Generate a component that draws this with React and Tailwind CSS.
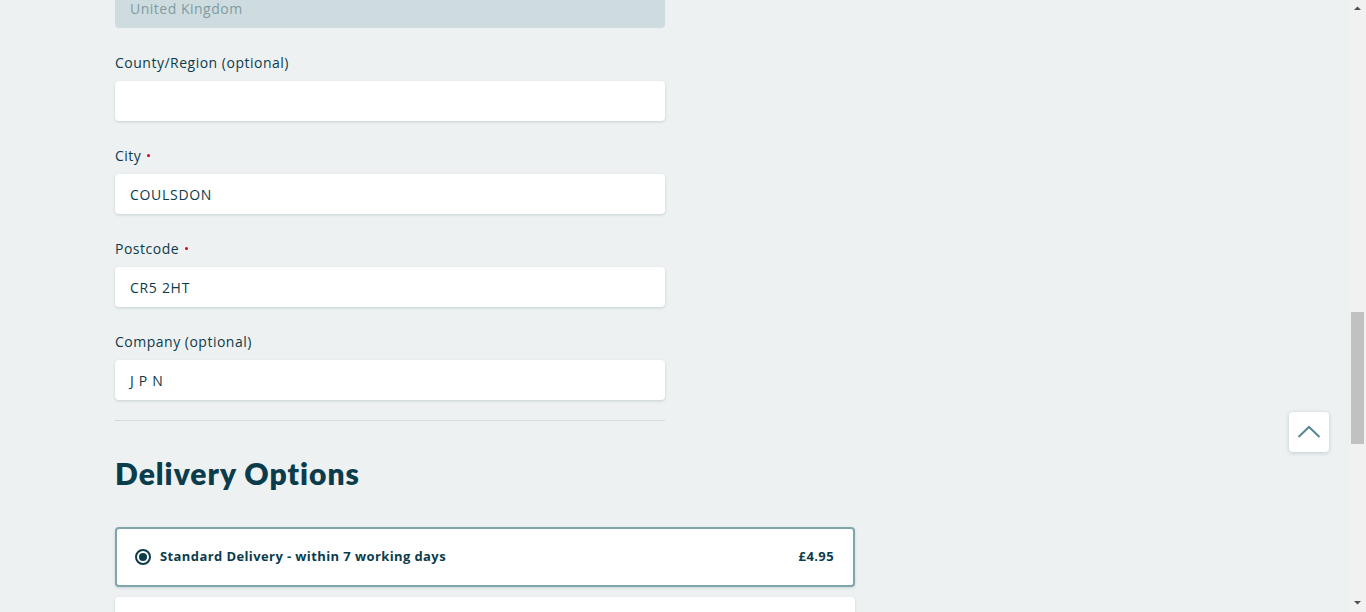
import React from 'react';

const fields = [
  { label: 'County/Region (optional)', value: '' },
  { label: 'City', value: 'COULSDON', required: true },
  { label: 'Postcode', value: 'CR5 2HT', required: true },
  { label: 'Company (optional)', value: 'J P N' },
];

const Field = ({ label, value, required }) => (
  <div className="mt-[23px]">
    <label className="flex items-center h-[22px] text-[14px] tracking-[0.5px] text-[#0d3b4b]">
      {label}
      {required && <span className="ml-[6px] w-[3px] h-[3px] rounded-full bg-[#d0021b]" />}
    </label>
    <div className="mt-[8px] h-[40px] w-[550px] bg-white rounded-[4px] shadow-[0_1px_3px_rgba(20,60,70,0.18)] flex items-center px-[15px] text-[14px] tracking-[0.7px] text-[#0d3b4b]">
      {value}
    </div>
  </div>
);

const Scrollbar = () => (
  <div className="w-[17px] h-full bg-[#f1f1f1] flex flex-col items-center shrink-0">
    <svg width="17" height="17" viewBox="0 0 17 17" className="shrink-0">
      <polygon points="5,10 12,10 8.5,6.5" fill="#505050" />
    </svg>
    <div className="mt-[295px] w-[13px] h-[132px] bg-[#c1c1c1]" />
    <div className="flex-1" />
    <svg width="17" height="17" viewBox="0 0 17 17" className="shrink-0">
      <polygon points="5,6 12,6 8.5,9.5" fill="#505050" />
    </svg>
  </div>
);

const App = () => {
  return (
    <div className="flex h-[612px] w-[1366px] overflow-hidden bg-[#edf1f2]" style={{ fontFamily: '"Open Sans", "Noto Sans", sans-serif' }}>
      <div className="flex-1 relative pl-[115px]">
        <div className="-mt-[12px] h-[40px] w-[550px] bg-[#cfdcdf] rounded-[4px] flex items-center px-[15px] text-[14px] tracking-[0.5px] text-[#7e9ba3]">
          United Kingdom
        </div>

        {fields.map((f, i) => (
          <Field key={i} {...f} />
        ))}

        <div className="mt-[20px] w-[550px] border-t border-[#d3dde0]" />

        <h2
          className="mt-[32px] text-[30px] leading-[40px] font-extrabold text-[#0b3c4c] tracking-[1px]"
          style={{ fontFamily: 'Lato, sans-serif' }}
        >
          Delivery Options
        </h2>

        <div className="mt-[34px] w-[740px] h-[60px] bg-white rounded-[4px] border-2 border-[#7fa5ac] flex items-center pl-[18px] pr-[19px] shadow-[0_1px_3px_rgba(20,60,70,0.15)]">
          <span className="w-[16px] h-[16px] rounded-full border-2 border-[#0b3c4c] flex items-center justify-center">
            <span className="w-[8px] h-[8px] rounded-full bg-[#0b3c4c]" />
          </span>
          <span className="ml-[9px] text-[13px] font-bold tracking-[0.4px] text-[#0b3c4c]">Standard Delivery - within 7 working days</span>
          <span className="ml-auto text-[13px] font-bold tracking-[0.4px] text-[#0b3c4c]">£4.95</span>
        </div>

        <div className="mt-[10px] w-[740px] h-[60px] bg-white rounded-[4px] shadow-[0_1px_3px_rgba(20,60,70,0.15)]" />

        <button className="absolute left-[1289px] top-[412px] w-[40px] h-[40px] bg-white rounded-[4px] shadow-[0_1px_4px_rgba(20,60,70,0.2)] flex items-center justify-center">
          <svg width="24" height="14" viewBox="0 0 24 14" fill="none">
            <path d="M1.5 12 L12 2 L22.5 12" stroke="#5a8791" strokeWidth="2" />
          </svg>
        </button>
      </div>
      <Scrollbar />
    </div>
  );
};

export default App;
